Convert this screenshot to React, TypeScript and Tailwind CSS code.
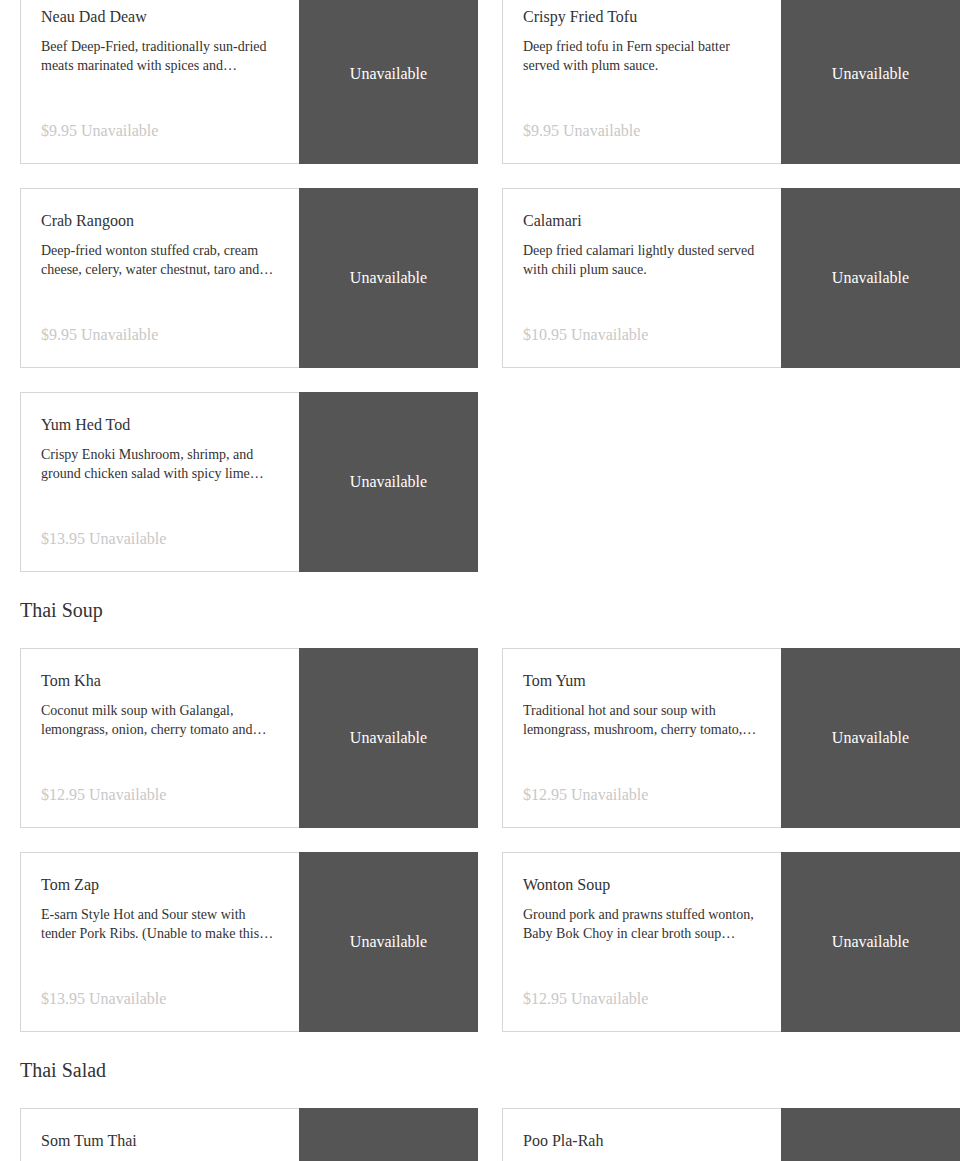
type Item = { name: string; desc: string; price: string };

type Section = { title?: string; items: Item[] };

const sections: Section[] = [
  {
    items: [
      {
        name: 'Neau Dad Deaw',
        desc: 'Beef Deep-Fried, traditionally sun-dried meats marinated with spices and seasonings, served with spicy sauce.',
        price: '$9.95',
      },
      { name: 'Crispy Fried Tofu', desc: 'Deep fried tofu in Fern special batter served with plum sauce.', price: '$9.95' },
      {
        name: 'Crab Rangoon',
        desc: 'Deep-fried wonton stuffed crab, cream cheese, celery, water chestnut, taro and carrot served with plum sauce.',
        price: '$9.95',
      },
      { name: 'Calamari', desc: 'Deep fried calamari lightly dusted served with chili plum sauce.', price: '$10.95' },
      {
        name: 'Yum Hed Tod',
        desc: 'Crispy Enoki Mushroom, shrimp, and ground chicken salad with spicy lime dressing, onion and cilantro.',
        price: '$13.95',
      },
    ],
  },
  {
    title: 'Thai Soup',
    items: [
      {
        name: 'Tom Kha',
        desc: 'Coconut milk soup with Galangal, lemongrass, onion, cherry tomato and mushroom.',
        price: '$12.95',
      },
      {
        name: 'Tom Yum',
        desc: 'Traditional hot and sour soup with lemongrass, mushroom, cherry tomato, onion and cilantro.',
        price: '$12.95',
      },
      {
        name: 'Tom Zap',
        desc: 'E-sarn Style Hot and Sour stew with tender Pork Ribs. (Unable to make this dish mild.)',
        price: '$13.95',
      },
      {
        name: 'Wonton Soup',
        desc: 'Ground pork and prawns stuffed wonton, Baby Bok Choy in clear broth soup topped with fried garlic.',
        price: '$12.95',
      },
    ],
  },
  {
    title: 'Thai Salad',
    items: [
      {
        name: 'Som Tum Thai',
        desc: 'Green papaya salad with tomato, green bean, peanut, dried shrimp and spicy lime dressing.',
        price: '$12.95',
      },
      {
        name: 'Poo Pla-Rah',
        desc: 'Green papaya salad with salted crab, fermented fish sauce, tomato and long bean.',
        price: '$12.95',
      },
    ],
  },
];

const MenuCard = ({ item }: { item: Item }) => (
  <div className="flex h-[180px]">
    <div className="flex min-w-0 flex-1 flex-col border-y border-l border-[#d6d6d6] bg-white px-5 pt-[21px] pb-[21px]">
      <div className="text-[16px] leading-[22px] text-[#333]">{item.name}</div>
      <p className="mt-[9px] line-clamp-2 text-[14px] leading-[19px] text-[#333]">{item.desc}</p>
      <div className="mt-auto text-[16px] leading-[22px] text-[#c8c8c8]">{item.price} Unavailable</div>
    </div>
    <div className="flex w-[179px] shrink-0 items-center justify-center bg-[#555555] text-[16px] text-white">
      Unavailable
    </div>
  </div>
);

export default function App() {
  return (
    <div className="min-h-screen bg-white font-['Liberation_Serif','Times_New_Roman',serif]">
      <div className="-mt-4 ml-5 w-[940px]">
        {sections.map((section, i) => (
          <div key={i}>
            {section.title && (
              <div className="flex h-[76px] items-center">
                <h2 className="text-[20px] leading-[24px] text-[#333]">{section.title}</h2>
              </div>
            )}
            <div className="grid grid-cols-2 gap-6">
              {section.items.map(item => (
                <MenuCard key={item.name} item={item} />
              ))}
            </div>
          </div>
        ))}
      </div>
    </div>
  );
}
